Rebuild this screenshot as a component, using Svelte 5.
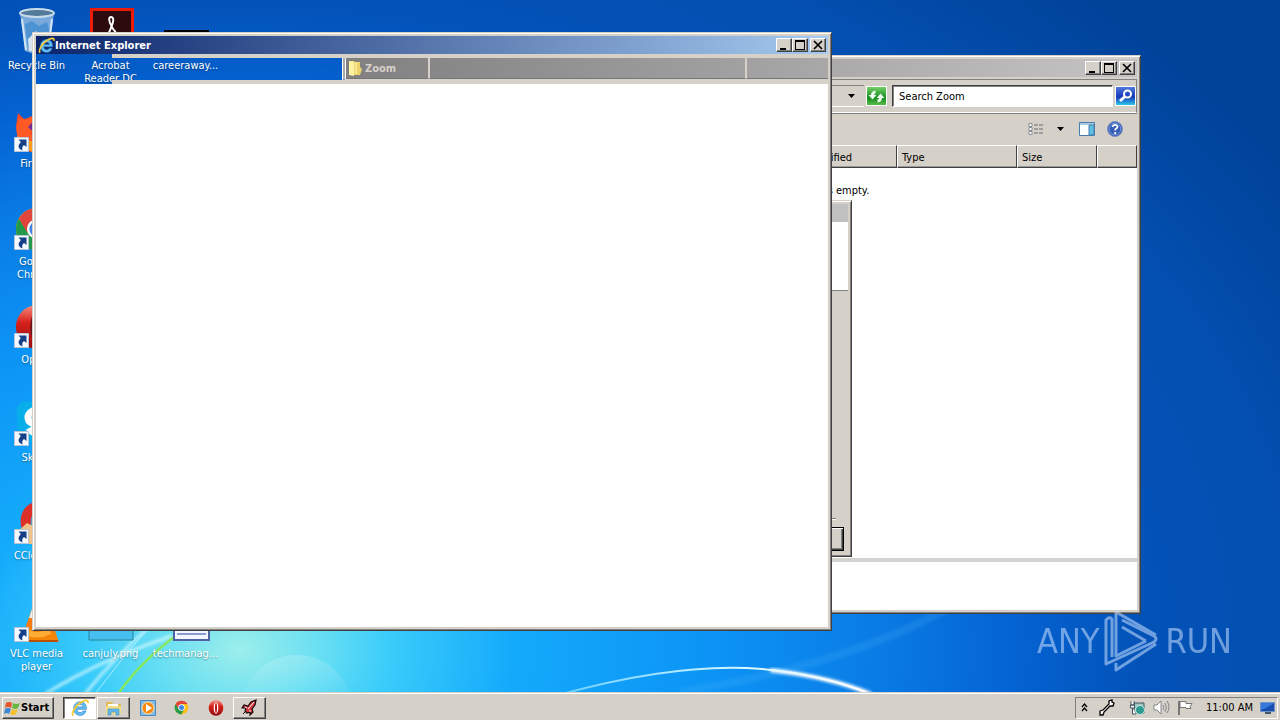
<script>
  const shortcuts = [
    { id: 'bin', label: 'Recycle Bin', col: 1, row: 1 },
    { id: 'firefox', label: 'Firefox', col: 1, row: 2, link: true },
    { id: 'chrome', label: 'Google Chrome', col: 1, row: 3, link: true },
    { id: 'opera', label: 'Opera', col: 1, row: 4, link: true },
    { id: 'skype', label: 'Skype', col: 1, row: 5, link: true },
    { id: 'ccleaner', label: 'CCleaner', col: 1, row: 6, link: true },
    { id: 'vlc', label: 'VLC media player', col: 1, row: 7, link: true },
    { id: 'acrobat', label: 'Acrobat Reader DC', col: 2, row: 1 },
    { id: 'png', label: 'canjuly.png', col: 2, row: 7 },
    { id: 'black', label: 'careeraway...', col: 3, row: 1 },
    { id: 'doc', label: 'techmanag...', col: 3, row: 7 }
  ];
  const tasks = [
    { id: 'ie', name: 'Internet Explorer', state: 'active' },
    { id: 'folder', name: 'Windows Explorer', state: 'open' },
    { id: 'wmp', name: 'Windows Media Player', state: '' },
    { id: 'chrome', name: 'Google Chrome', state: '' },
    { id: 'opera', name: 'Opera', state: '' },
    { id: 'rocket', name: 'Launcher', state: 'open' }
  ];
  let query = $state('Search Zoom');
</script>

{#snippet controls()}
  <div class="controls">
    <button aria-label="Minimize"><svg width="12" height="10" shape-rendering="crispEdges"><path d="M2 8h6v2H2z" /></svg></button>
    <button aria-label="Maximize"><svg width="12" height="10" shape-rendering="crispEdges"><path d="M1 0h10v10H1zM2 2v7h8V2z" fill-rule="evenodd" /></svg></button>
    <button aria-label="Close"><svg width="12" height="10"><path d="M2 1l8 8M10 1L2 9" stroke="#000" stroke-width="1.7" /></svg></button>
  </div>
{/snippet}

{#snippet ieLogo(size)}
  <svg width={size} height={size} viewBox="0 0 16 16">
    <path d="M13.7 9.2H5.3c.1 3.2 4.1 3.7 5.3 1.4h2.8c-1.1 3-3.2 4-5.2 4C4.600 14.600 2.300 12 2.300 8.500c0-3.600 2.600-6.100 5.900-6.100 3.600 0 5.800 2.700 5.500 6.800zM5.400 7h5.300c-.3-2.800-4.900-2.900-5.300 0z" fill="#62bdf2" stroke="#2478c0" stroke-width=".5" />
    <path d="M2.200 14.700C-.2 13.400 3.200 6.500 8.700 3 12.300.700 15.700.300 15 3.700" fill="none" stroke="#f4cb35" stroke-width="1.600" />
  </svg>
{/snippet}

{#snippet chromeLogo(size)}
  <svg width={size} height={size} viewBox="0 0 48 48">
    <circle cx="24" cy="24" r="22" fill="#fbc116" />
    <path d="M5 13A22 22 0 0 0 23 46L33 29 24 24 15 28z" fill="#25994a" />
    <path d="M5 13A22 22 0 0 1 43 13H24L14 28z" fill="#e0453b" />
    <circle cx="24" cy="24" r="10.500" fill="#fff" /><circle cx="24" cy="24" r="8" fill="#4285e8" />
  </svg>
{/snippet}

{#snippet operaLogo(size)}
  <svg width={size} height={size} viewBox="0 0 48 48">
    <defs><linearGradient id="op{size}" x2="0" y2="1"><stop stop-color="#f78c7d" /><stop offset=".4" stop-color="#d6221c" /><stop offset="1" stop-color="#950b0d" /></linearGradient></defs>
    <ellipse cx="24" cy="24" rx="22" ry="23" fill="url(#op{size})" />
    <ellipse cx="24" cy="24" rx="7" ry="17" fill={size > 20 ? '#65131c' : '#fff'} />
    {#if size < 20}<ellipse cx="24" cy="24" rx="3" ry="15" fill="#b91a1a" />{/if}
  </svg>
{/snippet}

{#snippet picture(id)}
  {#if id === 'chrome'}{@render chromeLogo(46)}
  {:else if id === 'opera'}{@render operaLogo(46)}
  {:else}
    <svg width="48" height="48" viewBox="0 0 48 48">
      {#if id === 'bin'}
        <path d="M7 5h34l-5 38q-12 5-24 0z" fill="#8eb9df" opacity=".85" />
        <path d="M12 16l7-3 7 5 8-4 3 10-4 14-9 5-9-4z" fill="#4d93d4" /><path d="M15 31l8-8 10 10-2 11-15-1z" fill="#d8e5ef" />
        <path d="M9 11l4 31M39 11l-4 31" stroke="#d2e5f5" stroke-width="2" />
        <ellipse cx="24" cy="5" rx="17" ry="4" fill="#52789a" stroke="#c6dceb" stroke-width="2" />
        <path d="M21 35l3-4 4 4M20 40h8" stroke="#648fb5" fill="none" />
      {:else if id === 'firefox'}
        <path d="M5 7l6 6 7-2 5-6 18 12 3 15-11 14H17L5 35 3 20z" fill="#f14927" />
        <path d="M6 12l8 2 4-4 6 9-7 9 8 7-7 7C3 37 1 23 6 12z" fill="#ff5a25" /><path d="M22 13l-7 8 5 5 14 4V13z" fill="#772c91" />
        <path d="M4 30l14 5 9 7-7 4C11 43 6 39 4 30z" fill="#ff9f18" />
      {:else if id === 'skype'}
        <path d="M5 17C-2 2 16-2 23 4c19-2 27 17 19 28 1 14-13 16-21 11C7 43 1 29 5 17z" fill="#08aeea" />
        <path d="M34 14c-8-9-23-2-18 7 4 5 15 3 16 9 0 6-12 5-16-2" fill="none" stroke="#fff" stroke-width="7" />
      {:else if id === 'ccleaner'}
        <path d="M8 28C5 8 21 1 35 4l6 37H15z" fill="#dc3028" /><path d="M18 20c3-8 13-9 19-5v20H17z" fill="#599cc5" />
        <path d="M2 36l12-11 12 6 8 15H4z" fill="#efc388" />
      {:else if id === 'vlc'}
        <path d="M23 1h5l10 32H12z" fill="#f77911" /><path d="M19 13h12l3 9H16z" fill="#eee" />
        <path d="M7 32h34l5 14H2z" fill="#f58508" /><path d="M12 32q12 8 24 0l2 6q-14 7-28 0z" fill="#ffac35" /><path d="M3 45h42" stroke="#b95207" stroke-width="2" />
      {:else if id === 'acrobat'}
        <path d="M3 0h44v46H3z" fill="#ec1c08" /><path d="M6 3h38v40H6z" fill="#2c0b0e" />
        <path d="M24 9q3 0 2 5c-2 7-8 19-8 19m6-24q-3 0-1 6c3 8 10 15 15 16" fill="none" stroke="#fff" stroke-width="2" />
      {:else if id === 'black'}
        <path d="M2 22h45v24H2z" fill="#000" />
      {:else if id === 'png'}
        <path d="M2 8h44v36H2z" fill="#46bff0" stroke="#27849b" />
      {:else}
        <path d="M12 0h35v44H12z" fill="#f2f5fd" stroke="#5262a1" stroke-width="2" /><path d="M15 38h29" stroke="#899bcd" stroke-width="2" />
      {/if}
    </svg>
  {/if}
{/snippet}

<div class="desktop">
  <svg class="wallpaper" viewBox="0 0 1280 720" preserveAspectRatio="none" aria-hidden="true">
    <defs>
      <filter id="soft"><feGaussianBlur stdDeviation="1.500" /></filter>
      <linearGradient id="orb" x2="0" y2="1"><stop stop-color="#fff" stop-opacity=".18" /><stop offset=".4" stop-color="#fff" stop-opacity=".02" /></linearGradient>
      <linearGradient id="arc"><stop stop-color="#6bd0ff" /><stop offset=".6" stop-color="#d8f7ff" /><stop offset="1" stop-color="#fff" /></linearGradient>
    </defs>
    <circle cx="297" cy="711" r="56" fill="url(#orb)" />
    <path d="M45 694Q100 660 172 636M85 694Q112 660 150 626" fill="none" stroke="#dafcff" stroke-width="3" opacity=".75" filter="url(#soft)" />
    <path d="M95 694Q119 662 145 632" fill="none" stroke="#bff5ff" opacity=".8" />
    <path d="M118 694Q140 662 178 634" fill="none" stroke="#88e85d" stroke-width="2.500" />
    <path d="M680 692Q850 665 960 602" fill="none" stroke="#6ac8ff" stroke-width="8" opacity=".14" filter="url(#soft)" />
    <path d="M770 670Q830 677 871 694" fill="none" stroke="#fff" stroke-width="4" filter="url(#soft)" />
    <path d="M562 694Q680 662 762 669Q825 675 870 694" fill="none" stroke="url(#arc)" stroke-width="2" />
  </svg>

  <main class="workspace">
    <div class="shortcuts">
      {#each shortcuts as s (s.id)}
        <a class="shortcut" href="#{s.id}" style:grid-column={s.col} style:grid-row={s.row}>
          <span class="picture">
            {@render picture(s.id)}
            {#if s.link}
              <svg class="arrow" width="15" height="15"><path d="M.5.500h14v14H.500z" fill="#f5f9ff" stroke="#b7c5da" /><path d="M4.500 2.500h8v7.500L10 8Q7.500 9.500 8.500 13.500 1.500 11 6.800 5z" fill="#153f86" /></svg>
            {/if}
          </span>
          <span>{s.label}</span>
        </a>
      {/each}
    </div>

    <section class="window explorer" aria-label="Zoom">
      <header class="titlebar inactive">{@render controls()}</header>
      <div class="addressbar">
        <div class="address"><svg width="7" height="4"><path d="M0 0h7L3.500 4z" /></svg></div>
        <button class="refresh" aria-label="Refresh"><svg width="19" height="19"><path d="M1.500 8H4Q4 4 8.500 3.500v3Q7 6.500 7 8h2.500L5.500 12.500zM17.500 11H15q0 4-4.500 4.500v-3q1.500 0 1.500-1.500H9.500l4-4.500z" fill="#f0fff0" /></svg></button>
        <input aria-label="Search" bind:value={query} />
        <button class="find" aria-label="Find"><svg width="18" height="18" fill="none"><path d="M8 9.500L3 14" stroke="#fff" stroke-width="3" /><circle cx="10.500" cy="7" r="3.500" stroke="#fff" stroke-width="2" /></svg></button>
      </div>
      <div class="toolbar">
        <button aria-label="View"><svg width="16" height="12" fill="none"><path d="M1 .500h3v3H1zM1 4.500h3v3H1zM1 8.500h3v3H1z" fill="#fff" stroke="#8a8f98" /><path d="M6 2h4m1 0h4M6 6h4m1 0h4M6 10h4m1 0h4" stroke="#676c72" /></svg></button>
        <button aria-label="View options" class="more"><svg width="7" height="4"><path d="M0 0h7L3.500 4z" /></svg></button>
        <button aria-label="Preview pane" class="pane"><svg width="16" height="14"><path d="M.500.500h15v13H.500z" fill="#fff" stroke="#467dac" /><path d="M1 1h14v2H1z" fill="#a7cbdf" /><path d="M10 3h5v10h-5z" fill="#5dc0e2" stroke="#467dac" /></svg></button>
        <button aria-label="Help"><svg width="16" height="16"><circle cx="8" cy="8" r="7.500" fill="#345cb5" stroke="#8090bd" /><circle cx="8" cy="8" r="5.800" fill="none" stroke="#8fb0ec" stroke-width=".7" /><path d="M5.500 6Q6 3.700 8.200 3.800C11 4 11 6.500 9.500 7.300Q8 8 8.200 9.500M8.200 11v2" fill="none" stroke="#fff" stroke-width="1.800" /></svg></button>
      </div>
      <div class="body">
        <div class="nav"></div>
        <div class="list">
          <table>
            <thead><tr><th>Name</th><th class="c120">Date modified</th><th class="c120">Type</th><th class="c80">Size</th><th class="c40"></th></tr></thead>
          </table>
          <p>This folder is empty.</p>
        </div>
      </div>
      <div class="details"></div>
    </section>

    <section class="window dialog" aria-label="Dialog">
      <header class="titlebar plain"></header>
      <div class="banner"></div>
      <div class="dialog-body"><hr /><button aria-label="Cancel"></button></div>
    </section>

    <section class="window browser" aria-label="Internet Explorer">
      <header class="titlebar active">{@render ieLogo(17)}<h1>Internet Explorer</h1>{@render controls()}</header>
      <div class="strip">
        <div class="gap"></div>
        <div class="bars">
          <div class="gap"></div>
          <div class="tabs">
            <span class="tab"><svg width="14" height="16"><path d="M1 1h5l1 1h5v5l2 2-2 6H1z" fill="#eed36b" /><path d="M1 1l5 1v14l-5-1z" fill="#fff2a4" /><path d="M8 2v12" stroke="#f8e892" stroke-width="2" /></svg>Zoom</span>
            <span class="tab"></span><span class="tab"></span>
          </div>
        </div>
      </div>
      <div class="page"></div>
    </section>

    <div class="brand">
      <span>ANY</span>
      <svg width="58" height="62" viewBox="0 0 58 62" fill="none" stroke="#c9e0ff" stroke-width="3" stroke-linejoin="round" aria-hidden="true">
        <path d="M9 47V9Q7 6 3 10V54L51 32Q55 29 51 26L19 10M13 2L53 25M13 2V46L43 31M13 2V9M19 17L43 31M13 53V60L53 34" />
      </svg>
      <span>RUN</span>
    </div>
  </main>

  <footer class="taskbar">
    <button class="start"><svg width="17" height="16"><path d="M2 3Q5 1 8 3L7 8Q4 6 1 8z" fill="#e75528" /><path d="M9 3q3 2 7 0l-2 5q-3 2-6 0z" fill="#69b743" /><path d="M1 9q3-2 6 0l-2 5Q3 12 0 14z" fill="#3b87d7" /><path d="M8 9q3 2 6 0l-2 5q-3 2-6 0z" fill="#f4c02b" /></svg>Start</button>
    <nav class="tasks" aria-label="Running programs">
      {#each tasks as t (t.id)}
        <button class="task {t.state}" aria-label={t.name}>
          {#if t.id === 'ie'}{@render ieLogo(18)}
          {:else if t.id === 'chrome'}{@render chromeLogo(15)}
          {:else if t.id === 'opera'}{@render operaLogo(16)}
          {:else if t.id === 'folder'}
            <svg width="17" height="16"><path d="M1 2h6l1 2h8v10H1z" fill="#dfbb55" /><path d="M3 4h10v3H3z" fill="#fff" /><path d="M1 6h15v8H1z" fill="#f3dc86" /><path d="M3 15V9h11v6h-3v-3H6v3z" fill="#62b6e8" stroke="#3b91c8" stroke-width=".6" /></svg>
          {:else if t.id === 'wmp'}
            <svg width="16" height="16"><path d="M.500.500h15v15H.500z" fill="#87bce4" stroke="#4889bd" /><circle cx="8" cy="8" r="6" fill="#f58a12" stroke="#ffe0a5" /><path d="M6 4l6 4-6 4z" fill="#fff" /></svg>
          {:else}
            <svg width="17" height="17"><path d="M15 1l-5 2-3 4-4-1-2 3 4 0-1 3 2 2 3-1 0 3 3-3-1-3 3-4z" fill="#d8343a" stroke="#170606" stroke-width="1.200" /><path d="M13 3L7 10M4 8l2 1M9 13l0-2" stroke="#fff" /><path d="M5 12l-3 3" stroke="#111" /></svg>
          {/if}
        </button>
      {/each}
    </nav>
    <div class="tray">
      <svg width="7" height="9" fill="none" stroke="#000" stroke-width="1.300"><path d="M1 4l2.500-3L6 4M1 8l2.500-3L6 8" /></svg>
      <svg width="18" height="17" class="wrench"><path d="M2 12l3-1 6-6 0-3 3-1 0 2 2 1-1 3-3 0-6 6-1 3-3 0z" fill="#fff" stroke="#000" stroke-width="1.300" /></svg>
      <svg width="17" height="16" class="net"><path d="M5 3h10v10H5z" fill="#9dc6c5" stroke="#45535d" /><circle cx="11" cy="10" r="4.500" fill="#2b9b91" stroke="#cde8df" /><path d="M2 1v4h3V1M1.500 5h4v3h-4zM3.500 8v6H7" fill="#fff" stroke="#45535d" /></svg>
      <svg width="17" height="15" fill="none" stroke="#84878b"><path d="M1 5h3l4-4v13l-4-4H1z" fill="#fff" /><path d="M10 5q2 2.500 0 5M12 3q3 4.500 0 9M14 1q4 6 0 12" /></svg>
      <svg width="17" height="15"><path d="M2 1v14" stroke="#777" stroke-width="2" /><path d="M3 1.500h6v2h6l-2 3 1 2H9v-1H3z" fill="#fff" stroke="#777" /></svg>
      <time>11:00 AM</time>
      <svg width="16" height="14"><path d="M.500 1.500h14v9H.500z" fill="#184dac" stroke="#6f91c5" /><path d="M1 9Q7 7 14 2V2H1z" fill="#3479dc" /><path d="M5 11h6v2H5z" fill="#49576e" /></svg>
    </div>
  </footer>
</div>

<style>
  :global(body) { background: #0752b5; }
  * { box-sizing: border-box; }
  button { font: inherit; color: inherit; padding: 0; margin: 0; border: 0; background: none; }
  svg { display: block; flex: none; }
  .desktop {
    --face: #d5d0c8;
    position: relative;
    min-height: 100vh;
    display: flex;
    flex-direction: column;
    overflow: hidden;
    font: 11px/13px "DejaVu Sans Condensed", Tahoma, "DejaVu Sans", sans-serif;
    color: #000;
    background: radial-gradient(ellipse 1250px 900px at 240px 650px, #9ceeea 0, #6ce0f2 6%, #3accfa 12%, #14aafb 22%, #0c93f5 38%, #0a7ee6 50%, #0463d2 62%, #0352b8 72%, #034fb0 84%, #004298 100%);
  }
  .wallpaper { position: absolute; inset: 0; width: 100%; height: 100%; }
  .workspace { position: relative; flex: 1; }

  .shortcuts { display: grid; grid-template-columns: 73px 75px 75px; grid-auto-rows: 98px; padding-top: 8px; height: 692px; }
  .shortcut { display: flex; flex-direction: column; align-items: center; gap: 3px; color: #fff; text-align: center; text-decoration: none; text-shadow: 0 1px 2px #0006; padding: 0 4px; }
  .picture { position: relative; display: flex; align-items: flex-end; justify-content: center; width: 48px; height: 48px; overflow: hidden; flex: none; }
  .arrow { position: absolute; left: 1px; bottom: 2px; }

  .window {
    position: absolute;
    display: flex;
    flex-direction: column;
    padding: 3px;
    border: 1px solid #404040;
    border-top-color: var(--face);
    border-left-color: var(--face);
    box-shadow: inset 1px 1px #fff, inset -1px -1px #808080, inset 0 0 0 3px var(--face);
  }
  .titlebar { display: flex; align-items: center; height: 18px; flex: none; padding: 0 2px; }
  .titlebar.active { background: linear-gradient(90deg, #0a246a, #a6caf0); color: #fff; }
  .titlebar.inactive { background: linear-gradient(90deg, #808080, #c4c4c4); }
  .titlebar.plain { background: #c0c0c0; }
  h1 { font-size: 11px; line-height: 13px; margin: 0; }
  .controls { display: flex; margin-left: auto; }
  .controls button { display: grid; place-items: center; width: 16px; height: 14px; }
  .controls button:last-child { margin-left: 2px; }
  .controls button, .start, .task.open, .dialog-body button {
    background: var(--face);
    border: 1px solid #404040;
    border-top-color: #fff;
    border-left-color: #fff;
    box-shadow: inset -1px -1px #808080;
  }

  .browser { left: 32px; top: 32px; width: 800px; height: 599px; }
  .strip { display: grid; grid-template-columns: 76px 1fr; height: 30px; flex: none; }
  .bars { display: grid; grid-template-columns: 230px 1fr; border: solid var(--face); border-width: 4px 0; }
  .tabs { display: grid; grid-template-columns: 84px 317px 1fr; border-left: 4px double #fff; border-bottom: 1px solid var(--face); background: linear-gradient(90deg, #808080, #a8a8a8); }
  .tab { display: flex; align-items: center; gap: 3px; padding-left: 2px; font-weight: bold; color: var(--face); border-right: 2px solid var(--face); border-bottom: 1px solid #777; }
  .tab:last-child { border-right: 0; }
  .page { flex: 1; background: #fff; }

  .explorer { left: 345px; top: 55px; width: 796px; height: 559px; background: var(--face); }
  .addressbar { display: flex; align-items: center; gap: 2px; height: 34px; margin-top: 2px; padding-left: 2px; border: 1px solid #fff; border-top-color: #808080; border-right-color: #808080; box-shadow: 0 1px #808080; flex: none; }
  .address { flex: 1; display: flex; align-items: center; justify-content: flex-end; height: 22px; padding-right: 9px; border: solid; border-width: 1px 0; border-color: #808080 #fff #fff; }
  .refresh, .find { display: grid; place-items: center; width: 21px; height: 20px; border: 1px solid #fff; }
  .refresh { background: linear-gradient(#75cf6a, #158c20 60%, #55bd48); margin-right: 3px; }
  .find { background: linear-gradient(#4d7adf, #1837b8 55%, #2cc8e8); }
  input { width: 221px; height: 22px; padding: 0 6px; font: inherit; background: #fff; border: 1px solid #fff; border-top-color: #404040; border-left-color: #404040; box-shadow: inset 1px 1px #808080; border-radius: 0; }
  .toolbar { display: flex; align-items: center; justify-content: flex-end; height: 32px; padding-right: 14px; flex: none; }
  .more { margin: 0 15px 0 13px; }
  .pane { margin-right: 12px; }
  .body { flex: 1; display: grid; grid-template-columns: 153px 1fr; border-bottom: 4px solid #d2d2ce; background: #fff; }
  table { width: 100%; table-layout: fixed; border-collapse: separate; border-spacing: 0; }
  th { height: 23px; padding: 2px 4px 0; text-align: left; font-weight: normal; background: var(--face); border: 1px solid #404040; border-top-color: #fff; border-left-color: #fff; box-shadow: inset 0 -1px #999; }
  .c120 { width: 120px; }
  .c80 { width: 80px; }
  .c40 { width: 40px; }
  .list p { margin: 16px 0 0; text-align: center; }
  .details { height: 48px; background: #fff; flex: none; }

  .dialog { left: 355px; top: 200px; width: 497px; height: 357px; background: var(--face); }
  .banner { height: 69px; background: #fff; border-bottom: 1px solid #808080; flex: none; }
  .dialog-body { flex: 1; display: flex; flex-direction: column; justify-content: flex-end; align-items: flex-end; padding: 0 4px 2px; }
  hr { width: 100%; margin: 0 8px 7px 0; border: 0; border-top: 1px solid #808080; border-bottom: 1px solid #fff; }
  .dialog-body button { width: 75px; height: 24px; border: 1px solid #000; box-shadow: inset 1px 1px #fff, inset -1px -1px #404040, inset -2px -2px #808080; }

  .brand { position: absolute; right: 48px; bottom: 20px; display: flex; align-items: center; gap: 4px; opacity: .55; color: #c9e0ff; font: 34px/44px "DejaVu Sans Condensed", sans-serif; }

  .taskbar { position: relative; display: flex; align-items: center; height: 28px; padding: 3px 2px 1px; background: var(--face); border-top: 1px solid var(--face); box-shadow: inset 0 1px #fff; }
  .start { display: flex; align-items: center; width: 52px; height: 22px; padding-left: 1px; font-weight: bold; font-size: 11px; }
  .tasks { display: flex; gap: 1px; margin-left: 9px; }
  .task { display: grid; place-items: center; width: 33px; height: 22px; }
  .task.active { background: #fff; border: 1px solid #fff; border-top-color: #404040; border-left-color: #404040; box-shadow: inset 1px 1px #808080; }
  .tray { display: flex; align-items: center; gap: 7px; height: 22px; margin-left: auto; padding: 0 1px 0 5px; border: 1px solid #fff; border-top-color: #808080; border-left-color: #808080; }
  .net { margin-left: 6px; }
  .wrench { margin-left: 3px; }
  time { margin: 0 0 0 5px; white-space: nowrap; }
</style>
